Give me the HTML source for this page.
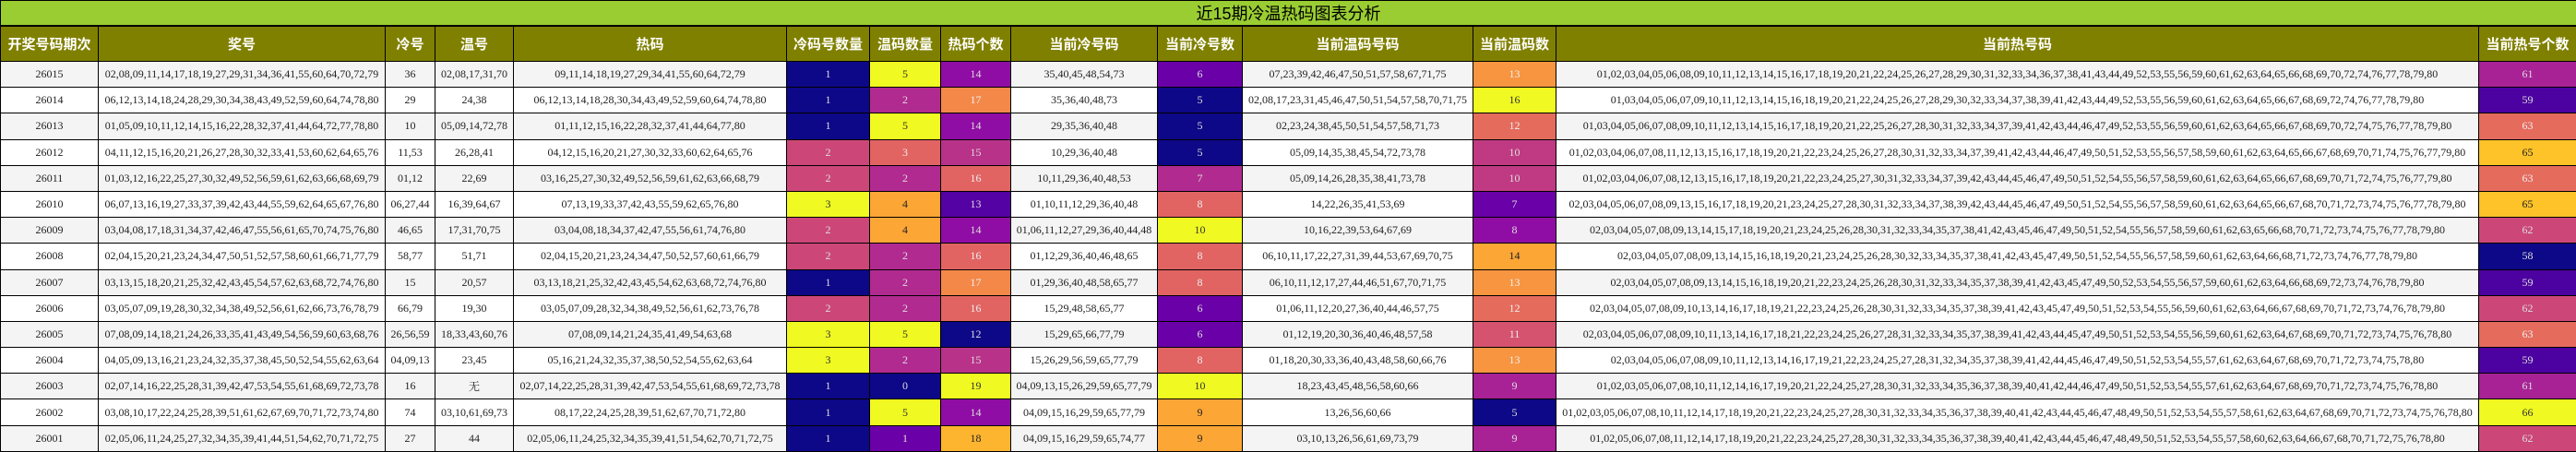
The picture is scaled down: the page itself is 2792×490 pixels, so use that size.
<!DOCTYPE html>
<html><head><meta charset="utf-8">
<style>
html,body{margin:0;padding:0;background:#fff;}
body{width:2792px;height:489px;overflow:hidden;}
table{border-collapse:collapse;table-layout:fixed;width:2792px;font-family:"Liberation Serif","Noto Serif CJK SC",serif;font-size:12px;color:#222;}
td,th{border:1px solid #000;text-align:center;padding:0;white-space:nowrap;overflow:hidden;}
.title td{background:#9acd32;height:25px;font-family:"Liberation Sans","Noto Sans CJK SC",sans-serif;font-size:18px;color:#000;border-bottom:2px solid #000;}
th{background:#808000;color:#fff;height:37px;font-family:"Liberation Sans","Noto Sans CJK SC",sans-serif;font-size:15px;font-weight:bold;}
tbody tr.d td{height:27.2px;}
tr.g td{background:#f4f4f4;}
tr.w td{background:#fff;}
tr td.N{background:#0d0887;color:#ddd}
tr td.Y{background:#f0f921;color:#333}
tr td.M{background:#b12a90;color:#ddd}
tr td.V{background:#8f0da4;color:#ddd}
tr td.O7{background:#f48849;color:#eee}
tr td.P{background:#6a00a8;color:#ddd}
tr td.K{background:#cc4778;color:#ddd}
tr td.S{background:#e16462;color:#eee}
tr td.O3{background:#f89540;color:#eee}
tr td.O4{background:#fca636;color:#222}
tr td.G{background:#fdc328;color:#222}
tr td.G8{background:#fdb42f;color:#222}
tr td.I{background:#4c02a1;color:#ddd}
tr td.A{background:#a82296;color:#ddd}
tr td.B{background:#b83289;color:#ddd}
tr td.E{background:#e56b5d;color:#eee}
tr td.R{background:#d5536f;color:#eee}
tr td.C{background:#c03a83;color:#ddd}
tr td.J{background:#5402a3;color:#ddd}
</style></head><body>
<table>
<colgroup>
<col style="width:106px"><col style="width:311px"><col style="width:54px"><col style="width:85px"><col style="width:296px"><col style="width:90px"><col style="width:77px"><col style="width:76px"><col style="width:159px"><col style="width:92px"><col style="width:250px"><col style="width:90px"><col style="width:1000px"><col style="width:106px">
</colgroup>
<tr class="title"><td colspan="14">近15期冷温热码图表分析</td></tr>
<tr><th>开奖号码期次</th><th>奖号</th><th>冷号</th><th>温号</th><th>热码</th><th>冷码号数量</th><th>温码数量</th><th>热码个数</th><th>当前冷号码</th><th>当前冷号数</th><th>当前温码号码</th><th>当前温码数</th><th>当前热号码</th><th>当前热号个数</th></tr>
<tr class="d g"><td>26015</td><td>02,08,09,11,14,17,18,19,27,29,31,34,36,41,55,60,64,70,72,79</td><td>36</td><td>02,08,17,31,70</td><td>09,11,14,18,19,27,29,34,41,55,60,64,72,79</td><td class="N">1</td><td class="Y">5</td><td class="V">14</td><td>35,40,45,48,54,73</td><td class="P">6</td><td>07,23,39,42,46,47,50,51,57,58,67,71,75</td><td class="O3">13</td><td>01,02,03,04,05,06,08,09,10,11,12,13,14,15,16,17,18,19,20,21,22,24,25,26,27,28,29,30,31,32,33,34,36,37,38,41,43,44,49,52,53,55,56,59,60,61,62,63,64,65,66,68,69,70,72,74,76,77,78,79,80</td><td class="A">61</td></tr>
<tr class="d w"><td>26014</td><td>06,12,13,14,18,24,28,29,30,34,38,43,49,52,59,60,64,74,78,80</td><td>29</td><td>24,38</td><td>06,12,13,14,18,28,30,34,43,49,52,59,60,64,74,78,80</td><td class="N">1</td><td class="M">2</td><td class="O7">17</td><td>35,36,40,48,73</td><td class="N">5</td><td>02,08,17,23,31,45,46,47,50,51,54,57,58,70,71,75</td><td class="Y">16</td><td>01,03,04,05,06,07,09,10,11,12,13,14,15,16,18,19,20,21,22,24,25,26,27,28,29,30,32,33,34,37,38,39,41,42,43,44,49,52,53,55,56,59,60,61,62,63,64,65,66,67,68,69,72,74,76,77,78,79,80</td><td class="I">59</td></tr>
<tr class="d g"><td>26013</td><td>01,05,09,10,11,12,14,15,16,22,28,32,37,41,44,64,72,77,78,80</td><td>10</td><td>05,09,14,72,78</td><td>01,11,12,15,16,22,28,32,37,41,44,64,77,80</td><td class="N">1</td><td class="Y">5</td><td class="V">14</td><td>29,35,36,40,48</td><td class="N">5</td><td>02,23,24,38,45,50,51,54,57,58,71,73</td><td class="E">12</td><td>01,03,04,05,06,07,08,09,10,11,12,13,14,15,16,17,18,19,20,21,22,25,26,27,28,30,31,32,33,34,37,39,41,42,43,44,46,47,49,52,53,55,56,59,60,61,62,63,64,65,66,67,68,69,70,72,74,75,76,77,78,79,80</td><td class="E">63</td></tr>
<tr class="d w"><td>26012</td><td>04,11,12,15,16,20,21,26,27,28,30,32,33,41,53,60,62,64,65,76</td><td>11,53</td><td>26,28,41</td><td>04,12,15,16,20,21,27,30,32,33,60,62,64,65,76</td><td class="K">2</td><td class="S">3</td><td class="B">15</td><td>10,29,36,40,48</td><td class="N">5</td><td>05,09,14,35,38,45,54,72,73,78</td><td class="C">10</td><td>01,02,03,04,06,07,08,11,12,13,15,16,17,18,19,20,21,22,23,24,25,26,27,28,30,31,32,33,34,37,39,41,42,43,44,46,47,49,50,51,52,53,55,56,57,58,59,60,61,62,63,64,65,66,67,68,69,70,71,74,75,76,77,79,80</td><td class="G">65</td></tr>
<tr class="d g"><td>26011</td><td>01,03,12,16,22,25,27,30,32,49,52,56,59,61,62,63,66,68,69,79</td><td>01,12</td><td>22,69</td><td>03,16,25,27,30,32,49,52,56,59,61,62,63,66,68,79</td><td class="K">2</td><td class="M">2</td><td class="S">16</td><td>10,11,29,36,40,48,53</td><td class="M">7</td><td>05,09,14,26,28,35,38,41,73,78</td><td class="C">10</td><td>01,02,03,04,06,07,08,12,13,15,16,17,18,19,20,21,22,23,24,25,27,30,31,32,33,34,37,39,42,43,44,45,46,47,49,50,51,52,54,55,56,57,58,59,60,61,62,63,64,65,66,67,68,69,70,71,72,74,75,76,77,79,80</td><td class="E">63</td></tr>
<tr class="d w"><td>26010</td><td>06,07,13,16,19,27,33,37,39,42,43,44,55,59,62,64,65,67,76,80</td><td>06,27,44</td><td>16,39,64,67</td><td>07,13,19,33,37,42,43,55,59,62,65,76,80</td><td class="Y">3</td><td class="O4">4</td><td class="J">13</td><td>01,10,11,12,29,36,40,48</td><td class="S">8</td><td>14,22,26,35,41,53,69</td><td class="P">7</td><td>02,03,04,05,06,07,08,09,13,15,16,17,18,19,20,21,23,24,25,27,28,30,31,32,33,34,37,38,39,42,43,44,45,46,47,49,50,51,52,54,55,56,57,58,59,60,61,62,63,64,65,66,67,68,70,71,72,73,74,75,76,77,78,79,80</td><td class="G">65</td></tr>
<tr class="d g"><td>26009</td><td>03,04,08,17,18,31,34,37,42,46,47,55,56,61,65,70,74,75,76,80</td><td>46,65</td><td>17,31,70,75</td><td>03,04,08,18,34,37,42,47,55,56,61,74,76,80</td><td class="K">2</td><td class="O4">4</td><td class="V">14</td><td>01,06,11,12,27,29,36,40,44,48</td><td class="Y">10</td><td>10,16,22,39,53,64,67,69</td><td class="V">8</td><td>02,03,04,05,07,08,09,13,14,15,17,18,19,20,21,23,24,25,26,28,30,31,32,33,34,35,37,38,41,42,43,45,46,47,49,50,51,52,54,55,56,57,58,59,60,61,62,63,65,66,68,70,71,72,73,74,75,76,77,78,79,80</td><td class="K">62</td></tr>
<tr class="d w"><td>26008</td><td>02,04,15,20,21,23,24,34,47,50,51,52,57,58,60,61,66,71,77,79</td><td>58,77</td><td>51,71</td><td>02,04,15,20,21,23,24,34,47,50,52,57,60,61,66,79</td><td class="K">2</td><td class="M">2</td><td class="S">16</td><td>01,12,29,36,40,46,48,65</td><td class="S">8</td><td>06,10,11,17,22,27,31,39,44,53,67,69,70,75</td><td class="O4">14</td><td>02,03,04,05,07,08,09,13,14,15,16,18,19,20,21,23,24,25,26,28,30,32,33,34,35,37,38,41,42,43,45,47,49,50,51,52,54,55,56,57,58,59,60,61,62,63,64,66,68,71,72,73,74,76,77,78,79,80</td><td class="N">58</td></tr>
<tr class="d g"><td>26007</td><td>03,13,15,18,20,21,25,32,42,43,45,54,57,62,63,68,72,74,76,80</td><td>15</td><td>20,57</td><td>03,13,18,21,25,32,42,43,45,54,62,63,68,72,74,76,80</td><td class="N">1</td><td class="M">2</td><td class="O7">17</td><td>01,29,36,40,48,58,65,77</td><td class="S">8</td><td>06,10,11,12,17,27,44,46,51,67,70,71,75</td><td class="O3">13</td><td>02,03,04,05,07,08,09,13,14,15,16,18,19,20,21,22,23,24,25,26,28,30,31,32,33,34,35,37,38,39,41,42,43,45,47,49,50,52,53,54,55,56,57,59,60,61,62,63,64,66,68,69,72,73,74,76,78,79,80</td><td class="I">59</td></tr>
<tr class="d w"><td>26006</td><td>03,05,07,09,19,28,30,32,34,38,49,52,56,61,62,66,73,76,78,79</td><td>66,79</td><td>19,30</td><td>03,05,07,09,28,32,34,38,49,52,56,61,62,73,76,78</td><td class="K">2</td><td class="M">2</td><td class="S">16</td><td>15,29,48,58,65,77</td><td class="P">6</td><td>01,06,11,12,20,27,36,40,44,46,57,75</td><td class="E">12</td><td>02,03,04,05,07,08,09,10,13,14,16,17,18,19,21,22,23,24,25,26,28,30,31,32,33,34,35,37,38,39,41,42,43,45,47,49,50,51,52,53,54,55,56,59,60,61,62,63,64,66,67,68,69,70,71,72,73,74,76,78,79,80</td><td class="K">62</td></tr>
<tr class="d g"><td>26005</td><td>07,08,09,14,18,21,24,26,33,35,41,43,49,54,56,59,60,63,68,76</td><td>26,56,59</td><td>18,33,43,60,76</td><td>07,08,09,14,21,24,35,41,49,54,63,68</td><td class="Y">3</td><td class="Y">5</td><td class="N">12</td><td>15,29,65,66,77,79</td><td class="P">6</td><td>01,12,19,20,30,36,40,46,48,57,58</td><td class="R">11</td><td>02,03,04,05,06,07,08,09,10,11,13,14,16,17,18,21,22,23,24,25,26,27,28,31,32,33,34,35,37,38,39,41,42,43,44,45,47,49,50,51,52,53,54,55,56,59,60,61,62,63,64,67,68,69,70,71,72,73,74,75,76,78,80</td><td class="E">63</td></tr>
<tr class="d w"><td>26004</td><td>04,05,09,13,16,21,23,24,32,35,37,38,45,50,52,54,55,62,63,64</td><td>04,09,13</td><td>23,45</td><td>05,16,21,24,32,35,37,38,50,52,54,55,62,63,64</td><td class="Y">3</td><td class="M">2</td><td class="B">15</td><td>15,26,29,56,59,65,77,79</td><td class="S">8</td><td>01,18,20,30,33,36,40,43,48,58,60,66,76</td><td class="O3">13</td><td>02,03,04,05,06,07,08,09,10,11,12,13,14,16,17,19,21,22,23,24,25,27,28,31,32,34,35,37,38,39,41,42,44,45,46,47,49,50,51,52,53,54,55,57,61,62,63,64,67,68,69,70,71,72,73,74,75,78,80</td><td class="I">59</td></tr>
<tr class="d g"><td>26003</td><td>02,07,14,16,22,25,28,31,39,42,47,53,54,55,61,68,69,72,73,78</td><td>16</td><td>无</td><td>02,07,14,22,25,28,31,39,42,47,53,54,55,61,68,69,72,73,78</td><td class="N">1</td><td class="N">0</td><td class="Y">19</td><td>04,09,13,15,26,29,59,65,77,79</td><td class="Y">10</td><td>18,23,43,45,48,56,58,60,66</td><td class="A">9</td><td>01,02,03,05,06,07,08,10,11,12,14,16,17,19,20,21,22,24,25,27,28,30,31,32,33,34,35,36,37,38,39,40,41,42,44,46,47,49,50,51,52,53,54,55,57,61,62,63,64,67,68,69,70,71,72,73,74,75,76,78,80</td><td class="A">61</td></tr>
<tr class="d w"><td>26002</td><td>03,08,10,17,22,24,25,28,39,51,61,62,67,69,70,71,72,73,74,80</td><td>74</td><td>03,10,61,69,73</td><td>08,17,22,24,25,28,39,51,62,67,70,71,72,80</td><td class="N">1</td><td class="Y">5</td><td class="V">14</td><td>04,09,15,16,29,59,65,77,79</td><td class="O4">9</td><td>13,26,56,60,66</td><td class="N">5</td><td>01,02,03,05,06,07,08,10,11,12,14,17,18,19,20,21,22,23,24,25,27,28,30,31,32,33,34,35,36,37,38,39,40,41,42,43,44,45,46,47,48,49,50,51,52,53,54,55,57,58,61,62,63,64,67,68,69,70,71,72,73,74,75,76,78,80</td><td class="Y">66</td></tr>
<tr class="d g"><td>26001</td><td>02,05,06,11,24,25,27,32,34,35,39,41,44,51,54,62,70,71,72,75</td><td>27</td><td>44</td><td>02,05,06,11,24,25,32,34,35,39,41,51,54,62,70,71,72,75</td><td class="N">1</td><td class="P">1</td><td class="G8">18</td><td>04,09,15,16,29,59,65,74,77</td><td class="O4">9</td><td>03,10,13,26,56,61,69,73,79</td><td class="A">9</td><td>01,02,05,06,07,08,11,12,14,17,18,19,20,21,22,23,24,25,27,28,30,31,32,33,34,35,36,37,38,39,40,41,42,43,44,45,46,47,48,49,50,51,52,53,54,55,57,58,60,62,63,64,66,67,68,70,71,72,75,76,78,80</td><td class="K">62</td></tr>
</table>
</body></html>
